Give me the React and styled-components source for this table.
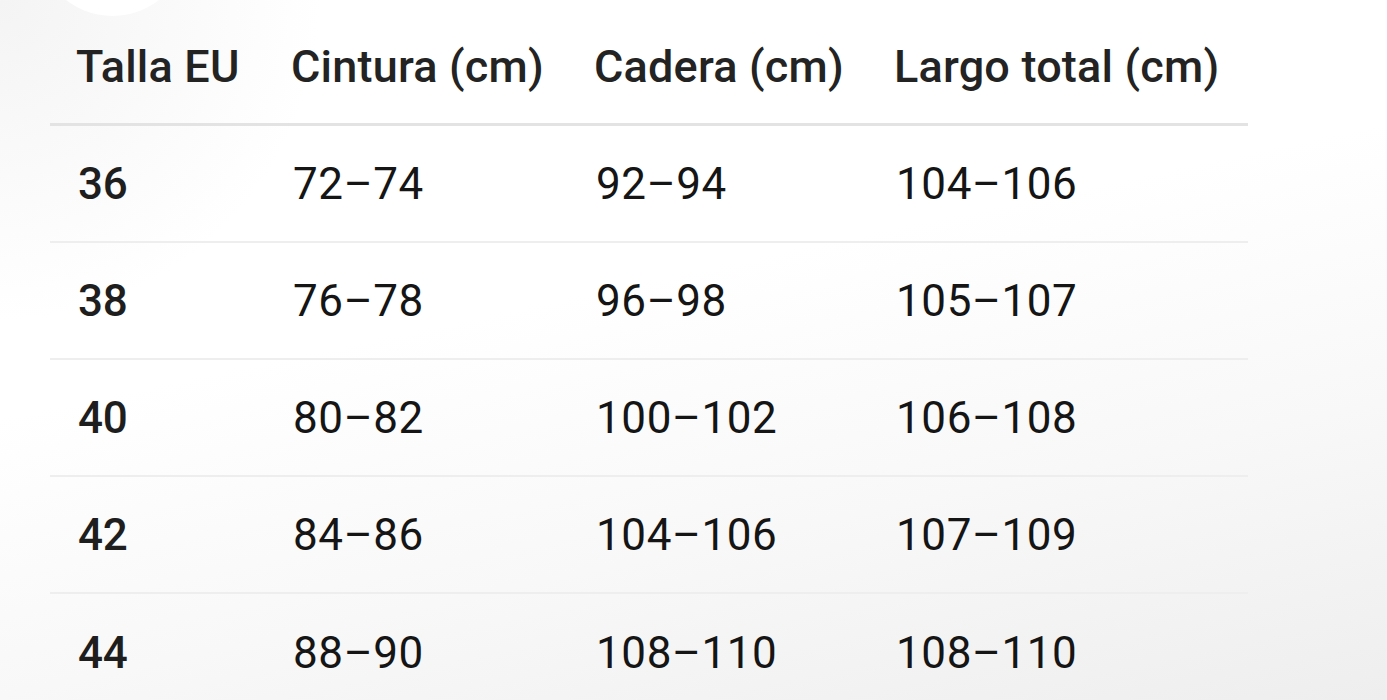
import React from 'react'
import styled, { createGlobalStyle } from 'styled-components'

const GlobalStyle = createGlobalStyle`
  html, body {
    margin: 0;
    padding: 0;
  }
  body {
    font-family: Roboto, 'Noto Sans', sans-serif;
    background: #f6f6f6;
  }
`

const Page = styled.div`
  position: relative;
  width: 1387px;
  height: 700px;
  overflow: hidden;
  background:
    radial-gradient(circle at 0 0, #f4f4f4 0, rgba(244, 244, 244, 0) 320px),
    linear-gradient(168deg, #ffffff 42%, #f8f8f8 70%, #eeeeee 100%);
  padding: 9px 0 0 50px;
  box-sizing: border-box;
`

const Blob = styled.div`
  position: absolute;
  left: 37px;
  top: -135px;
  width: 151px;
  height: 151px;
  border-radius: 50%;
  background: #ffffff;
`

const Table = styled.div`
  position: relative;
  display: grid;
  grid-template-columns: 215px 303px 300px 380px;
  width: 1198px;
`

const Cell = styled.div`
  height: 117px;
  display: flex;
  align-items: center;
  padding-left: 28px;
  font-size: 44px;
  color: ${(p) => (p.$strong ? '#1e1e1e' : '#151515')};
  font-weight: ${(p) => (p.$strong ? 500 : 400)};
  letter-spacing: ${(p) => (p.$strong ? '-0.2px' : '0.6px')};
  border-bottom: ${(p) => (p.$last ? 'none' : p.$head ? '3px solid #e3e3e3' : '2px solid #eeeeee')};
  box-sizing: border-box;
  white-space: nowrap;
`

const HeadCell = styled(Cell)`
  padding-left: 26px;
  font-size: 45px;
  color: #232323;
  letter-spacing: 0.2px;
`

const headers = ['Talla EU', 'Cintura (cm)', 'Cadera (cm)', 'Largo total (cm)']

const rows = [
  ['36', '72–74', '92–94', '104–106'],
  ['38', '76–78', '96–98', '105–107'],
  ['40', '80–82', '100–102', '106–108'],
  ['42', '84–86', '104–106', '107–109'],
  ['44', '88–90', '108–110', '108–110'],
]

export default function App() {
  return (
    <>
      <GlobalStyle />
      <Page>
        <Blob />
        <Table>
          {headers.map((h) => (
            <HeadCell key={h} $head $strong>
              {h}
            </HeadCell>
          ))}
          {rows.map((row, r) =>
            row.map((v, c) => (
              <Cell key={`${r}-${c}`} $strong={c === 0} $last={r === rows.length - 1}>
                {v}
              </Cell>
            ))
          )}
        </Table>
      </Page>
    </>
  )
}
